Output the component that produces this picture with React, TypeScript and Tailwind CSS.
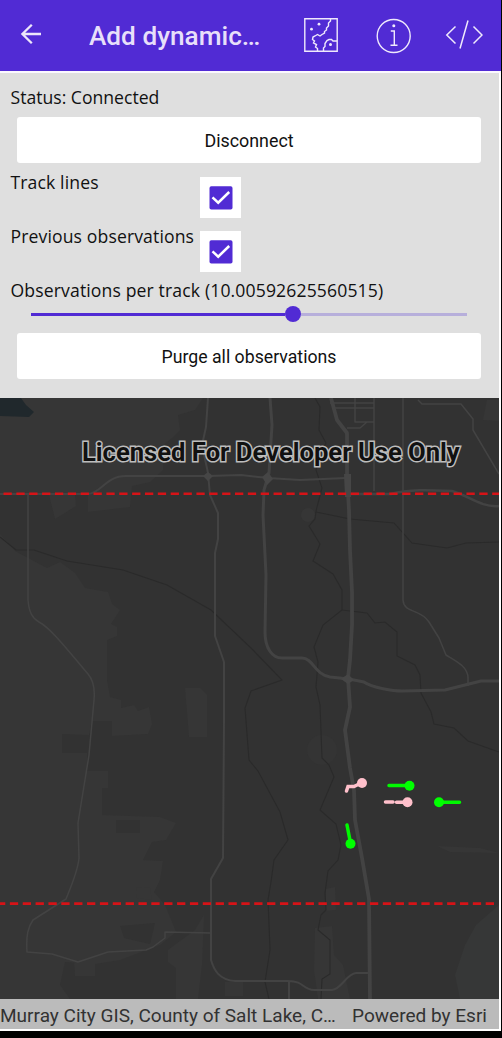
import React from "react";

function TopBar() {
  return (
    <header className="flex h-[71px] w-[501px] shrink-0 items-center bg-[#512bd4]">
      <svg className="-mt-[3px] ml-[20px] h-[22px] w-[22px] shrink-0" viewBox="0 0 22 22" fill="none" stroke="#ece6fa" strokeWidth="2.300">
        <path d="M21 11H2.500M11.800 1.800L2.400 11L11.800 20.200" />
      </svg>
      <h1 className="ml-[47px] w-[180px] shrink-0 whitespace-nowrap font-['Roboto',sans-serif] text-[26.200px] font-medium leading-[30px] text-[#e7dffa]">
        Add dynamic…
      </h1>
      <svg className="-mt-[1px] ml-[35px] h-[34px] w-[34px] shrink-0" viewBox="0 0 34 34" fill="none" stroke="#efe9fc" strokeWidth="1.400">
        <path d="M.8.800H33.200V33.200H.8Z" />
        <path d="M26.500 1V3L24.500 5V8L22.500 10V12L20.500 13.500V15L18 16.500L16 18L13.500 16.500L11 18L9 19L8.500 21.500L10.500 23L9.500 25L12.500 26.500L11.500 29L13.500 30.500V33M19.500 33V30L21 28.500V25.500L23 22.500L25 21.500L27.500 21.500L29 23H33" />
        <g fill="#efe9fc" stroke="none">
          <circle cx="15" cy="6.200" r="1.400" />
          <circle cx="7.500" cy="11.200" r="1.400" />
          <circle cx="26.500" cy="26.500" r="1.500" />
        </g>
      </svg>
      <svg className="ml-[38px] h-[36px] w-[36px] shrink-0" viewBox="0 0 36 36" fill="none" stroke="#efe9fc" strokeWidth="1.400">
        <circle cx="17.700" cy="18" r="16.500" />
        <path d="M14.800 13H18.300V27.300M14.500 27.300H21.500" />
        <circle cx="17.800" cy="7.800" r="1.500" fill="#efe9fc" stroke="none" />
      </svg>
      <svg className="-mt-[1px] ml-[33px] h-[36px] w-[38px] shrink-0" viewBox="0 0 38 36" fill="none" stroke="#efe9fc" strokeWidth="1.500">
        <path d="M10.500 9.500L1.800 18L10.500 26.500M28.500 9.500L37 18L28.500 26.500M23 3.500L15 31.500" />
      </svg>
    </header>
  );
}

function CheckBox() {
  return (
    <span role="checkbox" aria-checked="true" className="flex h-[41px] w-[41px] items-center justify-center bg-white">
      <svg className="h-[24px] w-[24px]" viewBox="0 0 24 24">
        <rect x=".5" y=".3" width="23" height="23.200" rx="1.800" fill="#512bd4" />
        <path d="M3.500 11.300L9.200 16.700L20.200 6" fill="none" stroke="#fff" strokeWidth="2.500" />
      </svg>
    </span>
  );
}

function Controls() {
  return (
    <section className="flex h-[325px] w-[499px] shrink-0 flex-col bg-[#dfdfdf] font-['Open_Sans','Noto_Sans',sans-serif] text-[17.600px] leading-[24px] text-[#111]">
      <p className="mt-[12px] pl-[10.500px]">Status: Connected</p>
      <button className="ml-[17px] mt-[8px] h-[46px] w-[464px] shrink-0 rounded-[3px] bg-white pt-[2px] font-['Roboto',sans-serif] text-[17.850px] text-[#111]">
        Disconnect
      </button>
      <div className="mt-[14px] flex h-[54px] pl-[10.500px]">
        <label className="-mt-[7px] w-[189.500px] whitespace-nowrap tracking-[0.120px]">Track lines</label>
        <CheckBox />
      </div>
      <div className="flex h-[54px] pl-[10.500px]">
        <label className="-mt-[7px] w-[189.500px] whitespace-nowrap tracking-[0.120px]">Previous observations</label>
        <CheckBox />
      </div>
      <p className="-mt-[7px] whitespace-nowrap pl-[10.500px] tracking-[0.130px]">Observations per track (10.00592625560515)</p>
      <div className="ml-[31px] mt-[4px] flex h-[16px] w-[436px] shrink-0 items-center">
        <div className="h-[3px] w-[254px] bg-[#512bd4]" />
        <div className="h-[16px] w-[16px] rounded-full bg-[#512bd4]" />
        <div className="h-[3px] flex-1 bg-[#b7afdb]" />
      </div>
      <button className="ml-[17px] mt-[11px] h-[46px] w-[464px] shrink-0 rounded-[3px] bg-white pt-[2px] font-['Roboto',sans-serif] text-[17.700px] text-[#111]">
        Purge all observations
      </button>
    </section>
  );
}

function MapDrawing() {
  return (
    <svg className="block h-[631px] w-[499px]" viewBox="0 398 499 631" fill="none">
      <rect y="398" width="499" height="631" fill="#323232" />
      <g fill="#363636">
        <path d="M0 398H203L195 410L178 415L180 430L172 438L163 445V470L150 482L132 486L130 507L88 512V495H75L76 506L55 519L49 495H0Z" />
        <path d="M0 534L15 551L47 568L60 562L75 573L85 588L108 592L112 604L120 610L111 624L117 627V636L107 640V680L110 697L121 700V708L134 705L138 711L149 707L152 724L148 734L112 736V721H92L89 735L62 734V753H87V771H108V788H102V815L160 817L176 823L166 840L152 842L143 860L163 861L160 880L154 892L165 905L176 932L160 945L120 960L95 964L65 962L60 985L70 999H0Z" />
        <path d="M185 688H200L207 695V737H189Z" />
        <path d="M136 887L150 888L152 900L137 898ZM168 950L195 930L204 915L202 965L198 999H176V968L168 962ZM225 982H243V996H225ZM74 960H95V976H75Z" />
        <circle cx="308" cy="515" r="7" />
        <path d="M326 889L335 887L336 910L326 911ZM315 928L332 926L334 955L343 965L350 999H318L314 970ZM487 400H499V421L483 420ZM437 846L480 848L499 853L450 852Z" />
      </g>
      <circle cx="322" cy="750" r="15" fill="#343434" />
      <path d="M499 905L476 925L465 945L455 975L460 999H499Z" fill="#363737" />
      <path d="M0 398H21L26 405L34 412L29 417L0 416Z" fill="#20282c" />
      <g fill="#323232"><path d="M116 820H140V833H116ZM120 926L155 923L150 944L124 938Z" /></g>

      <g stroke="#2a2a2a" strokeWidth="1.100">
        <path d="M0 537L16 550L34 550L67 561L123 570L167 585L211 610L251 648L282 680L251 691L245 708L249 760L258 771L280 812L288 840L274 860L271 882L268 900L270 950L265 982L269 999" />
        <path d="M315 398L320 407L319 430L326 443L320 455L316 470L322 488L316 511L315 519L309 526L320 544L313 561L333 574L342 590V610L323 625L314 647L318 662L316 687L320 705L322 758L329 765L334 777L320 810L336 824L341 845L338 860L328 871L325 893L326 910L321 915L318 930L330 940V974L322 979L321 999" />
        <path d="M316 512L350 519L394 523L412 543L447 548L466 543L499 542M342 610L367 613L375 623L385 622L397 632V656L415 665L420 675L421 693L431 712L434 724L454 728L468 741L499 752" />
      </g>

      <g stroke="#434343" strokeLinejoin="round">
        <path d="M0 494H28M28 494V600C29 612 32 618 39 622C52 629 70 653 88 674C94 681 95 690 94 700L89 755L78 823L79 858C78 871 70 889 66 899L33 920C28 927 26 935 27 952L52 954L78 962L108 952L146 950L153 947L165 938V932L211 933" strokeWidth="1.500" />
        <path d="M0 494H88C102 493 105 476 126 476H208L241 475L268 478L300 480L346 478" strokeWidth="2" />
        <path d="M208 398L206 427L202 445L208 473L210 495L218 513V539L215 553V636L224 662V722L223 858L211 879V960C214 970 219 980 235 981H288C305 981 302 990 314 990H332C342 989 346 974 356 973H369M289 981V1008" strokeWidth="2" />
        <path d="M270 398L272 425L269 473L264 490L263 515L266 575L265 632C265 648 272 658 282 658H302C313 658 315 675 330 677L349 679L364 682C372 688 394 691 402 691L445 690L469 684L481 681H499" strokeWidth="3" />
        <path d="M331 398L337 420L347 433L347 477L349 510L350 550L352 592V625L350 660L348 678L350 707L345 730L350 768L354 790L355 820L362 858L369 899L370 1001L362 1015" strokeWidth="3.800" />
        <path d="M330 403H374M335 408H374M355 398V422H374V398V491M347 428H360L367 422M403 398V600C404 614 420 608 429 622L439 638L446 655C454 660 468 666 468 678V686M418 400L422 404L461 404L473 419V430L499 474" strokeWidth="1.500" />
        <path d="M350 494L391 494C408 489 430 490 452 491C467 495 482 508 499 506" strokeWidth="2.500" />
      </g>
      <path d="M203 476L208 472L213 476L208 481ZM262 477L268 472L273 479L267 485ZM344 474H351V497H345ZM341 679L348 674L354 680L348 684Z" fill="#464646" />

      <path d="M3.500 493.800H499M-3 903.600H494" stroke="#d61317" strokeWidth="2.600" strokeDasharray="8.300 4.560" />

      <g strokeLinecap="round" strokeWidth="3.500">
        <path d="M346.500 791L348 786.500H354L361 783M385.500 802H393M396.500 802.300H406" stroke="#ffc0cb" />
        <path d="M389 785.500H409M439 802.300H459.500M347 825L350.500 843" stroke="#00f900" />
      </g>
      <g fill="#ffc0cb"><circle cx="362" cy="783" r="5" /><circle cx="407.500" cy="802.300" r="5" /></g>
      <g fill="#00ff00"><circle cx="409.500" cy="785.700" r="5" /><circle cx="439" cy="802.300" r="5" /><circle cx="350.500" cy="843.800" r="5" /></g>
    </svg>
  );
}

function MapView() {
  return (
    <section className="relative h-[631px] w-[499px] shrink-0 overflow-hidden">
      <MapDrawing />
      <div className="absolute left-[82px] top-[39px] whitespace-nowrap font-['Roboto',sans-serif] text-[25.600px] font-bold leading-[30px] text-[#111] [-webkit-text-stroke:3px_#bdbdbd] [paint-order:stroke_fill]">
        Licensed For Developer Use Only
      </div>
      <div className="absolute bottom-0 left-0 flex h-[30px] w-[499px] justify-between bg-[#bbbbbb] pr-[12px] font-['Roboto',sans-serif] text-[19.050px] leading-[33px] text-[#323232]">
        <span className="whitespace-nowrap">Murray City GIS, County of Salt Lake, C…</span>
        <span className="whitespace-nowrap">Powered by Esri</span>
      </div>
    </section>
  );
}

export default function App() {
  return (
    <main className="h-[1038px] w-[502px] overflow-hidden bg-black">
      <div className="flex h-[1031px] w-[501px] flex-col bg-white">
        <TopBar />
        <div className="h-[2px] shrink-0 bg-[#fbf8ff]" />
        <Controls />
        <MapView />
      </div>
    </main>
  );
}
